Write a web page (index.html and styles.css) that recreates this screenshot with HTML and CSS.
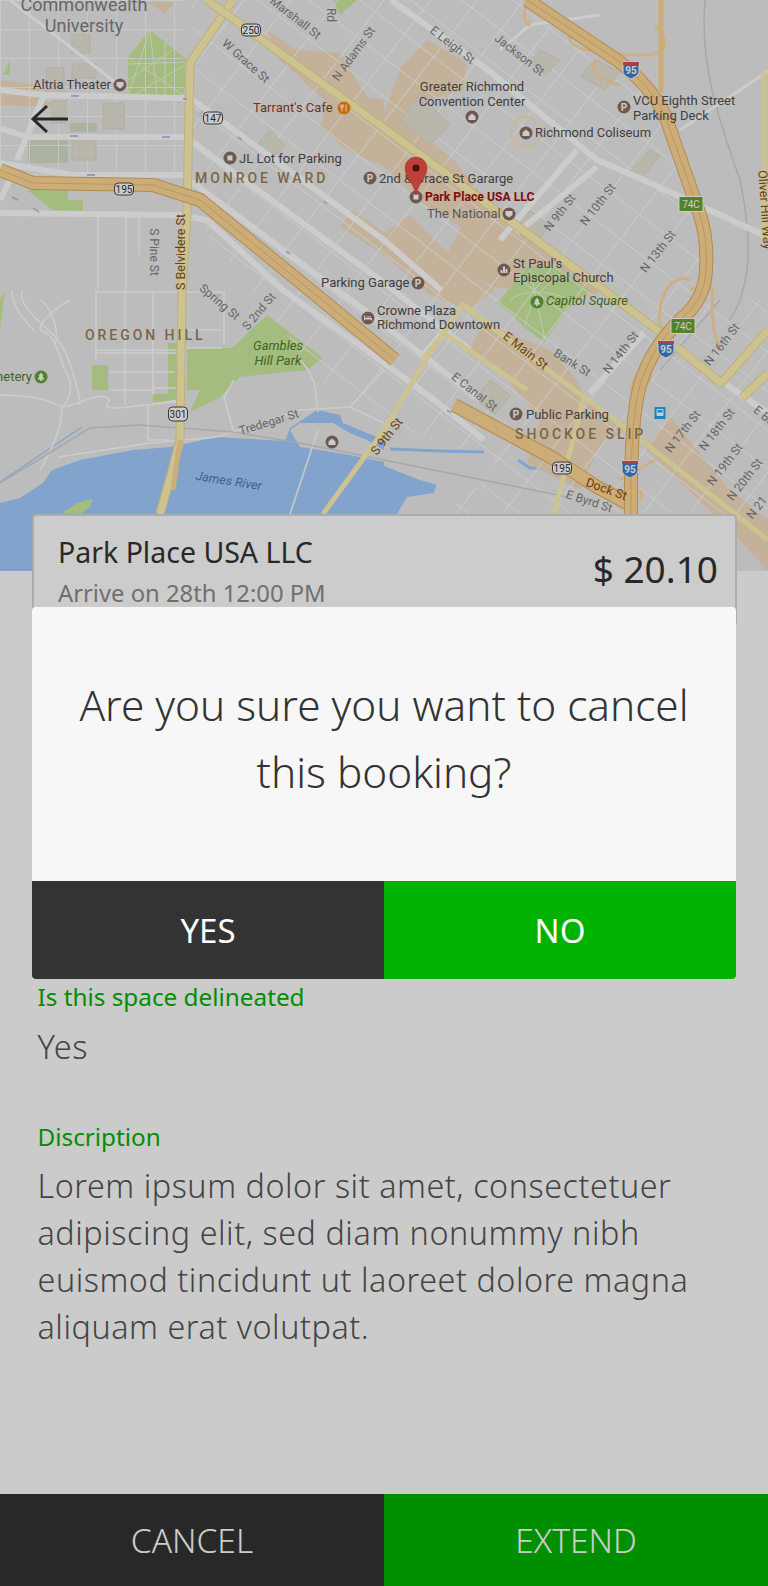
FILE: index.html
```html
<!DOCTYPE html>
<html lang="en">
<head>
<meta charset="utf-8">
<title>Booking</title>
<link rel="stylesheet" href="styles.css">
</head>
<body>
<div class="screen">
  <div class="map">
    <svg class="map-svg" viewBox="0 0 768 571" width="768" height="571" xmlns="http://www.w3.org/2000/svg">
      <defs>
        <pattern id="cityGrid" patternUnits="userSpaceOnUse" width="37" height="31" patternTransform="translate(8 3) rotate(37.5)">
          <path d="M0 0H37M0 0V31" class="grid-line"/>
        </pattern>
        <pattern id="westGrid" patternUnits="userSpaceOnUse" width="29" height="29">
          <path d="M0 0H29M0 0V29" class="grid-line"/>
        </pattern>
        <g id="poiHouse"><circle r="6.5" class="poi"/><path d="M-3.5 3V-.5L0 -3.5L3.5 -.5V3Z" class="poi-glyph"/></g>
        <g id="poiSquare"><circle r="6.5" class="poi"/><rect x="-2.5" y="-2.5" width="5" height="5" class="poi-glyph"/></g>
        <g id="poiParkP"><circle r="6.5" class="poi"/><text y="3.5" text-anchor="middle" class="poi-p">P</text></g>
        <g id="poiTheater"><circle r="6.5" class="poi"/><path d="M-3.5 -3H3.5V1L0 3.5L-3.5 1Z" class="poi-glyph"/></g>
        <g id="poiChart"><circle r="6.5" class="poi"/><path d="M-3.5 3V0H-1.5V3ZM-1 3V-3.500H1V3ZM1.500 3V-1H3.500V3Z" class="poi-glyph"/></g>
        <g id="poiBed"><circle r="6.5" class="poi"/><path d="M-4 2.500V-2.500H-3V0H4V2.500H3V1.500H-3V2.500ZM-2 -1.500H3V-.5H-2Z" class="poi-glyph"/></g>
        <g id="poiTree"><circle r="6.5" class="tree"/><path d="M0 -4.500L2.500 -1H1.500L3.500 2.500H.8V4H-.8V2.500H-3.500L-1.500 -1H-2.500Z" class="poi-glyph"/></g>
      </defs>

      <rect class="land" width="768" height="571"/>

      <!-- water -->
      <path class="water" d="M0 503L20 498 43 483 52 470 80 460 133 450 170 447 217 437 285 441 290 428 317 410 340 415 343 423 384 440 384 466 420 480 445 487 500 505 500 571H0Z"/>
      <path class="land" d="M290 430L300 423H333L350 433 367 440 384 450 384 462 350 455 300 447Z"/>
      <path class="land" d="M397 514L407 497 434 493 437 483 464 487 467 493 497 497 520 514Z"/>
      <path class="water-line" d="M390 449L440 451 484 452M518 460L530 468 556 468M569 477L610 500"/>
      <path class="water-thin" d="M0 482L82 427"/>

      <!-- tan downtown blocks -->
      <path class="tan" d="M267 30L297 50 340 53 367 97 384 100 384 113 401 67 427 40 467 63 464 90 417 103 404 123 451 157 484 197 524 227 584 277 604 290 590 295 494 287 444 260 461 227 427 207 384 167 347 150 320 127 327 103 277 57Z"/>
      <path class="tan" d="M340 227L353 210 384 233 410 215 455 260 494 290 470 310 430 295 384 255Z"/>
      <path class="tan" d="M484 323L550 350 577 380 584 397 625 430 600 445 580 490 527 463 540 420 497 367 467 353Z"/>
      <path class="tan" d="M671 417L727 487 768 520 768 571 737 537 644 447Z"/>
      <path class="tan" d="M0 80L40 85 40 100 70 108 0 105Z"/>
      <path class="tan" d="M148 2H175L165 14Z"/>

      <!-- parks -->
      <path class="park" d="M128 57L150 30 190 62 183 95H128ZM3 75L10 60V75ZM333 0H357L340 15ZM27 190H68V212H55ZM68 200H83V212H68Z"/>
      <path class="park" d="M267 315L323 358 307 370 240 377 220 397 190 412 200 390 187 390V348H232ZM168 343H177V397H168ZM92 365H108V390H92ZM153 394H177V402H153ZM62 513L77 503 93 499 90 507 80 514ZM0 330V300L5 290Z"/>
      <path class="park" d="M497 303L527 267 557 267 590 290 567 310 544 342 524 327 511 313Z"/>
      <path class="park-line" d="M150 30L157 95M150 30L128 95M190 62L128 64M190 62L134 95M128 57L183 95M165 43V95M128 80L176 48M510 300C530 285 560 295 570 300M525 325C530 300 545 285 560 275M530 270L545 340"/>
      <rect class="park-faded" x="28" y="140" width="40" height="23"/>
      <rect class="park-faded" x="70" y="123" width="27" height="9"/>

      <!-- street grids -->
      <path fill="url(#cityGrid)" d="M192 0H520L620 70 660 110 700 240 700 300 768 300V514H440L500 470 440 440 384 425 320 380 270 310 192 215Z"/>
      <path fill="url(#westGrid)" d="M0 0H183V175H0Z"/>
      <path class="thin" d="M42 215H183M98 215V290M126 215V290M139 215V255M96 290V360M125 290V405M153 290V395M96 350H177M110 372H175M110 390H155M95 353H177M96 292H224V345M186 330H222M186 348H222M153 388H176M12 290C12 310 30 325 35 332M23 290C15 305 45 325 58 340 70 355 80 395 80 405M70 300C60 305 40 320 40 330 55 335 55 345 65 370 75 385 70 400 62 407 62 420 60 435 40 470M40 300C50 305 60 330 55 345M0 395C30 395 50 400 62 407 80 405 100 390 110 400 96 415 130 405 177 402M58 457L150 443 217 437 300 410 350 407 384 423M234 380L224 397 233 430M300 360C320 380 315 400 318 412M350 407L384 370M373 350L384 340M318 430L290 514M178 400L148 405V440H170"/>
      <path class="rail" d="M0 483L33 463 90 428 140 425 233 432 300 443 384 460 567 497M705 0C700 60 715 110 740 180 750 230 755 280 730 320M660 370L720 300"/>

      <!-- campus buildings -->
      <g class="bldg">
        <rect x="72" y="35" width="18" height="18"/><rect x="72" y="64" width="24" height="14"/><rect x="46" y="68" width="18" height="28"/>
        <rect x="103" y="103" width="21" height="26"/><rect x="72" y="140" width="24" height="20"/><rect x="52" y="101" width="14" height="22"/>
        <rect x="200" y="112" width="18" height="5"/><path d="M270 130L285 146 272 158 258 144Z"/>
        <path d="M420 95L450 125 430 145 400 120Z"/><path d="M540 50L560 60 545 75 530 62Z"/><path d="M595 60L620 72 605 90 580 76Z"/>
        <path d="M650 150L660 156 640 180 630 172Z"/><path d="M530 210L550 225 535 245 515 230Z"/><path d="M490 380L510 395 495 415 475 400Z"/>
      </g>

      <!-- main white roads -->
      <path class="road" d="M0 90L43 95 183 98 193 100 384 240 441 290M0 128L27 137H183L190 140 384 283 470 350M0 163L73 175H183L192 182 384 325 480 400M0 213L180 215 207 220 283 290 384 363 434 400 484 440M391 0L484 67 597 160 637 177 768 237M644 333L590 393M724 383L768 413M577 150L500 240M597 167L517 233M43 97L17 160M0 200L10 180"/>
      <path class="road-thin" d="M10 0L125 90M500 50L530 25 600 15M770 70L680 130M460 310L420 356"/>

      <!-- ramps -->
      <path class="ramp" d="M530 20C530 32 520 20 527 0M570 35C565 50 600 55 650 55 680 50 655 25 655 25M600 60C580 65 610 85 620 85M690 280C660 270 650 330 670 340M395 330C395 320 380 320 384 325M640 500C650 480 620 500 610 485M620 480L655 460M646 385C660 370 640 360 630 390M690 290C730 270 700 300 720 350"/>

      <!-- yellow roads -->
      <path class="yellow-edge" d="M233 0L190 63 187 213 182 290 180 440 173 467 160 514"/>
      <path class="yellow" d="M233 0L190 63 187 213 182 290 180 440 173 467 160 514"/>
      <path class="yellow-edge" d="M207 0L384 128 604 290 661 333M677 347L721 383 768 330M742 398L768 373"/>
      <path class="yellow" d="M207 0L384 128 604 290 661 333M677 347L721 383 768 330M742 398L768 373"/>
      <path class="yellow-thin" d="M461 303L557 377 584 397 641 440 768 540M462 305L427 358 384 430 323 514M424 358L444 333 464 347 527 390M584 397L554 514M764 70V240"/>

      <!-- highways -->
      <path class="hwy-edge" d="M0 170L33 183 153 185 200 200 233 227 310 290 395 360"/>
      <path class="hwy" d="M0 170L33 183 153 185 200 200 233 227 310 290 395 360"/>
      <path class="hwy-line" d="M0 170L33 183 153 185 200 200 233 227 310 290 395 360"/>
      <path class="hwy-edge" d="M454 405L551 457 597 487 627 503"/>
      <path class="hwy" d="M454 405L551 457 597 487 627 503"/>
      <path class="hwy-edge" d="M527 0L617 60Q650 85 665 115L700 215Q708 240 706 270 705 300 680 320 650 350 640 385 630 420 631 514"/>
      <path class="hwy" d="M527 0L617 60Q650 85 665 115L700 215Q708 240 706 270 705 300 680 320 650 350 640 385 630 420 631 514"/>
      <path class="hwy-line" d="M527 0L617 60Q650 85 665 115L700 215Q708 240 706 270 705 300 680 320 650 350 640 385 630 420 631 514"/>
      <path class="hwy-narrow" d="M661 0V93M180 440L173 490"/>

      <!-- road direction arrows -->
      <path class="one-way" d="M71 96H79M78 136H70M170 137H162M95 175H87M187 99H183M242 140L238 137M12 197L18 200M33 208L39 212M290 254L286 251M327 204L323 201M451 413L447 410"/>

      <!-- shields -->
      <g class="shield-group">
        <g transform="translate(251 30)"><rect x="-9.500" y="-6" width="19" height="12" rx="4" class="shield"/><text y="3.500" text-anchor="middle" class="shield-text">250</text></g>
        <g transform="translate(213 118)"><rect x="-9.500" y="-6" width="19" height="12" rx="4" class="shield"/><text y="3.500" text-anchor="middle" class="shield-text">147</text></g>
        <g transform="translate(124 189)"><rect x="-9.500" y="-6" width="19" height="12" rx="4" class="shield"/><text y="3.500" text-anchor="middle" class="shield-text">195</text></g>
        <g transform="translate(178 414)"><rect x="-9.500" y="-7" width="19" height="14" rx="4" class="shield"/><text y="3.500" text-anchor="middle" class="shield-text">301</text></g>
        <g transform="translate(562 468)"><rect x="-9.500" y="-6" width="19" height="12" rx="4" class="shield"/><text y="3.500" text-anchor="middle" class="shield-text">195</text></g>
        <g transform="translate(631 70)"><path d="M-8 -8H8V1C8 5 4 7 0 9 -4 7 -8 5 -8 1Z" class="i-blue"/><rect x="-8" y="-8" width="16" height="3" class="i-red"/><text y="4" text-anchor="middle" class="i-text">95</text></g>
        <g transform="translate(666 349)"><path d="M-8 -8H8V1C8 5 4 7 0 9 -4 7 -8 5 -8 1Z" class="i-blue"/><rect x="-8" y="-8" width="16" height="3" class="i-red"/><text y="4" text-anchor="middle" class="i-text">95</text></g>
        <g transform="translate(630 469)"><path d="M-8 -8H8V1C8 5 4 7 0 9 -4 7 -8 5 -8 1Z" class="i-blue"/><rect x="-8" y="-8" width="16" height="3" class="i-red"/><text y="4" text-anchor="middle" class="i-text">95</text></g>
        <g transform="translate(691 204)"><rect x="-12" y="-7.500" width="24" height="15" class="exit"/><text y="3.500" text-anchor="middle" class="exit-text">74C</text></g>
        <g transform="translate(683 326)"><rect x="-12" y="-7.500" width="24" height="15" class="exit"/><text y="3.500" text-anchor="middle" class="exit-text">74C</text></g>
        <g transform="translate(660 413)"><rect x="-5.500" y="-6" width="11" height="12" class="bus"/><rect x="-3.500" y="-4" width="7" height="7" rx="1" class="poi-glyph"/><rect x="-2.500" y="-3" width="5" height="2.500" class="bus"/></g>
      </g>

      <!-- place labels -->
      <g class="lbl-big" text-anchor="middle"><text x="84" y="11">Commonwealth</text><text x="84" y="32">University</text></g>
      <text x="33" y="89" class="lbl">Altria Theater</text><use href="#poiTheater" x="120" y="85"/>
      <text x="253" y="112" class="lbl-food">Tarrant's Cafe</text>
      <g transform="translate(344 108)"><circle r="6.500" class="food"/><path d="M-2 -3.500V3.500M2 -3.500V3.500M-3.200 -3.500V-1C-3.200 0 -.8 0 -.8 -1V-3.500" class="food-glyph"/></g>
      <use href="#poiSquare" x="230" y="158"/><text x="239" y="163" class="lbl">JL Lot for Parking</text>
      <text x="195" y="183" class="lbl-hood">MONROE WARD</text>
      <use href="#poiParkP" x="370" y="178"/><text x="379" y="183" class="lbl">2nd &amp; Grace St Gararge</text>
      <text x="85" y="340" class="lbl-hood">OREGON HILL</text>
      <g class="lbl" text-anchor="middle"><text x="472" y="91">Greater Richmond</text><text x="472" y="106">Convention Center</text></g>
      <use href="#poiHouse" x="472" y="117"/>
      <circle cx="526" cy="132" r="15" class="ring"/><use href="#poiHouse" x="526" y="133"/>
      <text x="535" y="137" class="lbl">Richmond Coliseum</text>
      <use href="#poiParkP" x="624" y="107"/><text x="633" y="105" class="lbl">VCU Eighth Street</text><text x="633" y="120" class="lbl">Parking Deck</text>
      <text x="427" y="218" class="lbl-soft">The National</text><use href="#poiTheater" x="509" y="214"/>
      <use href="#poiSquare" x="416" y="197"/>
      <text x="425" y="201" class="lbl-select">Park Place USA LLC</text>
      <use href="#poiChart" x="504" y="270"/><text x="513" y="268" class="lbl">St Paul's</text><text x="513" y="282" class="lbl">Episcopal Church</text>
      <use href="#poiTree" x="537" y="302"/><text x="546" y="305" class="lbl-park">Capitol Square</text>
      <text x="321" y="287" class="lbl">Parking Garage</text><use href="#poiParkP" x="418" y="283"/>
      <use href="#poiBed" x="368" y="318"/><text x="377" y="315" class="lbl">Crowne Plaza</text><text x="377" y="329" class="lbl">Richmond Downtown</text>
      <use href="#poiParkP" x="516" y="414"/><text x="526" y="419" class="lbl">Public Parking</text>
      <text x="515" y="439" class="lbl-hood">SHOCKOE SLIP</text>
      <g class="lbl-park" text-anchor="middle"><text x="278" y="350">Gambles</text><text x="278" y="365">Hill Park</text></g>
      <text x="32" y="381" text-anchor="end" class="lbl-green">netery</text>
      <use href="#poiTree" x="41" y="377"/>
      <use href="#poiHouse" x="332" y="442"/>
      <text transform="translate(228 485) rotate(9)" text-anchor="middle" class="lbl-water">James River</text>

      <!-- street labels -->
      <g class="st" text-anchor="middle">
        <text transform="translate(293 21) rotate(38)">Marshall St</text>
        <text transform="translate(243 64) rotate(42)">W Grace St</text>
        <text transform="translate(357 56) rotate(-54)">N Adams St</text>
        <text transform="translate(327 15) rotate(90)">Rd</text>
        <text transform="translate(150 252) rotate(90)">S Pine St</text>
        <text transform="translate(217 305) rotate(40)">Spring St</text>
        <text transform="translate(262 314) rotate(-50)">S 2nd St</text>
        <text transform="translate(450 48) rotate(38)">E Leigh St</text>
        <text transform="translate(517 58) rotate(38)">Jackson St</text>
        <text transform="translate(563 215) rotate(-52)">N 9th St</text>
        <text transform="translate(601 207) rotate(-52)">N 10th St</text>
        <text transform="translate(661 254) rotate(-52)">N 13th St</text>
        <text transform="translate(570 366) rotate(32)">Bank St</text>
        <text transform="translate(624 355) rotate(-52)">N 14th St</text>
        <text transform="translate(725 347) rotate(-52)">N 16th St</text>
        <text transform="translate(472 395) rotate(38)">E Canal St</text>
        <text transform="translate(686 434) rotate(-52)">N 17th St</text>
        <text transform="translate(720 432) rotate(-52)">N 18th St</text>
        <text transform="translate(728 467) rotate(-52)">N 19th St</text>
        <text transform="translate(748 482) rotate(-52)">N 20th St</text>
        <text transform="translate(760 510) rotate(-52)">N 21</text>
        <text transform="translate(761 418) rotate(40)">E Br</text>
        <text transform="translate(588 505) rotate(18)">E Byrd St</text>
        <text transform="translate(270 426) rotate(-17)">Tredegar St</text>
      </g>
      <g class="st-major" text-anchor="middle">
        <text transform="translate(185 252) rotate(-90)">S Belvidere St</text>
        <text transform="translate(761 210) rotate(86)">Oliver Hill Way</text>
        <text transform="translate(523 354) rotate(38)">E Main St</text>
        <text transform="translate(390 439) rotate(-52)">S 9th St</text>
        <text transform="translate(605 493) rotate(20)">Dock St</text>
      </g>

      <!-- location pin -->
      <path class="pin" d="M416 195C414 183 405 178 405 168A11 11 0 0 1 427 168C427 178 418 183 416 195Z"/>
      <circle cx="416" cy="168" r="3.600" class="pin-dot"/>
    </svg>
    <button class="back" type="button" aria-label="Back">
      <svg width="40" height="32" viewBox="0 0 40 32" xmlns="http://www.w3.org/2000/svg"><path d="M38 16H3M17 3L3 16L17 29" class="back-icon"/></svg>
    </button>
  </div>

  <section class="card">
    <div class="card-info">
      <h2 class="card-name">Park Place USA LLC</h2>
      <p class="card-time">Arrive on 28th 12:00 PM</p>
    </div>
    <div class="card-price">$ 20.10</div>
  </section>

  <section class="details">
    <h3 class="field-label">Is this space delineated</h3>
    <p class="field-value">Yes</p>
    <h3 class="field-label field-gap">Discription</h3>
    <p class="field-text">Lorem ipsum dolor sit amet, consectetuer adipiscing elit, sed diam nonummy nibh euismod tincidunt ut laoreet dolore magna aliquam erat volutpat.</p>
  </section>

  <footer class="actions">
    <button class="action action-dark" type="button"><span>CANCEL</span></button>
    <button class="action action-green" type="button"><span>EXTEND</span></button>
  </footer>

  <div class="scrim"></div>

  <div class="dialog" role="dialog">
    <p class="dialog-text">Are you sure you want to cancel this booking?</p>
    <div class="dialog-buttons">
      <button class="dialog-btn dialog-yes" type="button">YES</button>
      <button class="dialog-btn dialog-no" type="button">NO</button>
    </div>
  </div>
</div>
</body>
</html>
```

FILE: styles.css
```css
* { box-sizing: border-box; }
html, body { margin: 0; padding: 0; }
body { background: #fff; font-family: "Noto Sans", "Open Sans", sans-serif; color: #333; }
h2, h3, p { margin: 0; font-weight: 400; }
button { border: 0; padding: 0; background: none; font: inherit; color: inherit; }

.screen { position: relative; width: 768px; height: 1586px; display: flex; flex-direction: column; background: #fefefe; overflow: hidden; }

.map { position: relative; flex: none; height: 571px; }
.map-svg { display: block; }
.back { position: absolute; left: 30px; top: 103px; width: 40px; height: 32px; }
.back svg { display: block; }
.back-icon { fill: none; stroke: #333; stroke-width: 3; }

/* map layers (colours sit under a 20% black scrim) */
.land { fill: #ececec; }
.water { fill: #a3ccff; }
.water-line { fill: none; stroke: #a3ccff; stroke-width: 3; }
.water-thin { fill: none; stroke: #a3ccff; stroke-width: 1.2; }
.tan { fill: #f5dec0; }
.park { fill: #cfeba0; }
.park-line { fill: none; stroke: #f4f8e8; stroke-width: 1; }
.park-faded { fill: #d8dfca; }
.bldg { fill: #e8e4d8; stroke: #e0d9c8; stroke-width: 1; }
.grid-line { fill: none; stroke: #fff; stroke-width: 1.6; }
.thin { fill: none; stroke: #fff; stroke-width: 1.5; }
.rail { fill: none; stroke: #d2d2d2; stroke-width: 1.5; }
.road { fill: none; stroke: #fff; stroke-width: 6; }
.road-thin { fill: none; stroke: #fff; stroke-width: 3; }
.ramp { fill: none; stroke: #ffdca6; stroke-width: 3; }
.yellow { fill: none; stroke: #fff4b4; stroke-width: 7; stroke-linejoin: round; }
.yellow-edge { fill: none; stroke: #eedc9a; stroke-width: 9; stroke-linejoin: round; }
.yellow-thin { fill: none; stroke: #fff4b4; stroke-width: 5; stroke-linejoin: round; }
.hwy-edge { fill: none; stroke: #e0ac68; stroke-width: 14; stroke-linejoin: round; }
.hwy { fill: none; stroke: #ffd996; stroke-width: 12; stroke-linejoin: round; }
.hwy-line { fill: none; stroke: #ecbc7a; stroke-width: 1; stroke-linejoin: round; }
.hwy-narrow { fill: none; stroke: #ffd996; stroke-width: 5; }
.one-way { fill: none; stroke: #c0c5ec; stroke-width: 2; }

.poi { fill: #8a6e66; }
.poi-glyph { fill: #fff; }
.poi-p { font: 700 10px Roboto, sans-serif; fill: #fff; }
.ring { fill: none; stroke: #f6e6ca; stroke-width: 3; }
.food { fill: #fa8a14; }
.food-glyph { fill: none; stroke: #fff; stroke-width: 1; }
.tree { fill: #63a53a; }
.shield { fill: #fff; stroke: #444; stroke-width: 1; }
.shield-text { font: 400 10px Roboto, sans-serif; fill: #333; }
.i-blue { fill: #3f7fd0; stroke: #fff; stroke-width: 1; }
.i-red { fill: #d8525a; }
.i-text { font: 700 10px Roboto, sans-serif; fill: #fff; }
.exit { fill: #6aa336; stroke: #fff; stroke-width: 1; }
.exit-text { font: 400 10px Roboto, sans-serif; fill: #fff; }
.bus { fill: #1fa9f0; }

.lbl, .lbl text { font: 400 13px Roboto, sans-serif; fill: #505050; }
.lbl-soft { font: 400 13px Roboto, sans-serif; fill: #707070; }
.lbl-big text { font: 400 18px Roboto, sans-serif; fill: #808080; }
.lbl-food { font: 400 13px Roboto, sans-serif; fill: #8f3f28; }
.lbl-hood { font: 500 14px Roboto, sans-serif; letter-spacing: 2.95px; fill: #9a7f58; }
.lbl-select { font: 700 12.2px Roboto, sans-serif; fill: #a01010; }
.lbl-park, .lbl-park text { font: italic 400 13px Roboto, sans-serif; fill: #4d8024; }
.lbl-green { font: 400 13px Roboto, sans-serif; fill: #4d8024; }
.lbl-water { font: italic 400 12.500px Roboto, sans-serif; fill: #4a78b8; }
.st text { font: 400 12px Roboto, sans-serif; fill: #808080; }
.st-major text { font: 400 12.500px Roboto, sans-serif; fill: #8a4f10; }
.pin { fill: #ea5048; stroke: #c8423c; stroke-width: .5; }
.pin-dot { fill: #6b1010; }

/* booking card */
.card { flex: none; position: relative; display: flex; justify-content: space-between; align-items: flex-start; width: 705px; height: 112px; margin: -57px 0 0 32px; padding: 19px 17px 0 24px; background: #fff; border: 2px solid #d8d8d8; border-radius: 4px; }
.card-name { font-size: 28.500px; line-height: 34px; font-weight: 400; color: #333; }
.card-time { margin-top: 7px; font-size: 23.800px; line-height: 34px; color: #8c8c8c; }
.card-price { margin-top: 9px; font-size: 37px; line-height: 50px; color: #333; }

/* detail fields */
.details { flex: 1; padding: 355px 38px 0 37.500px; }
.field-label { font-size: 24.300px; line-height: 32px; color: #00b300; }
.field-value { margin-top: 10px; font-size: 32.500px; font-weight: 300; letter-spacing: .55px; line-height: 47px; color: #555; }
.field-gap { margin-top: 51px; }
.field-text { margin-top: 9px; font-size: 32.300px; font-weight: 300; letter-spacing: .55px; line-height: 47px; color: #555; }

/* bottom actions */
.actions { flex: none; display: flex; height: 92px; }
.action { flex: 1; font-size: 33.500px; font-weight: 300; color: #fff; }
.action-dark { background: #333; }
.action-green { background: #00b300; }

/* dialog */
.scrim { position: absolute; inset: 0; background: rgba(0, 0, 0, .2); }
.dialog { position: absolute; left: 32px; top: 607px; width: 704px; height: 372px; display: flex; flex-direction: column; background: #f7f7f7; border-radius: 4px; overflow: hidden; }
.dialog-text { flex: 1; padding: 0 40px 12px; display: flex; align-items: center; text-align: center; font-size: 42.300px; font-weight: 300; line-height: 67px; color: #333; }
.dialog-buttons { flex: none; display: flex; height: 98px; }
.dialog-btn { flex: 1; font-size: 33px; color: #fff; }
.dialog-yes { background: #333; }
.dialog-no { background: #00b300; }
```
